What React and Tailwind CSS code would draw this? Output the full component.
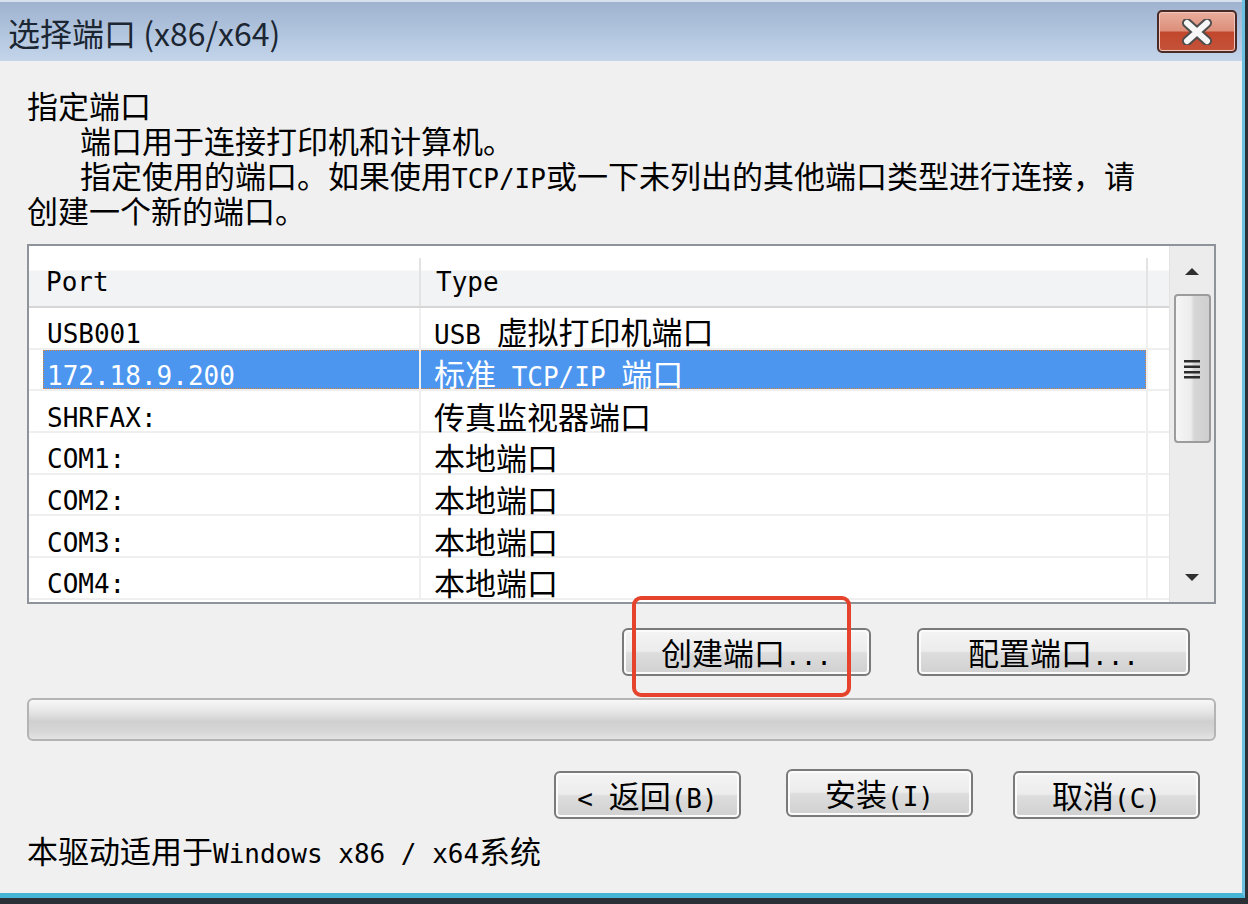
import React from 'react';

// Half-width latin text, the way SimSun draws it next to CJK glyphs
const M = ({ children, className = '' }) => (
    <span className={`font-['DejaVu_Sans_Mono',monospace] text-[26px] leading-none ${className}`}>{children}</span>
);

const ports = [
    { port: 'USB001', type: <><M>USB </M>虚拟打印机端口</> },
    { port: '172.18.9.200', type: <>标准<M> TCP/IP </M>端口</>, selected: true },
    { port: 'SHRFAX:', type: <>传真监视器端口</> },
    { port: 'COM1:', type: <>本地端口</> },
    { port: 'COM2:', type: <>本地端口</> },
    { port: 'COM3:', type: <>本地端口</> },
    { port: 'COM4:', type: <>本地端口</> },
];

const btnClass =
    "flex items-center justify-center h-[48px] rounded-[6px] border-2 border-[#7a7a7a] bg-[linear-gradient(to_bottom,#f4f4f4_0%,#ececec_48%,#dddddd_52%,#d0d0d0_100%)] shadow-[inset_0_0_0_2px_#fbfbfb] text-black leading-none";

const Button = ({ className = '', children }) => (
    <div className={`${btnClass} ${className}`}>
        <span className="leading-none">{children}</span>
    </div>
);

const Row = ({ port, type, selected }) => {
    const sel = selected ? 'bg-[#4d96ef] text-white border-dotted border-[#d8823c]' : 'border-transparent';
    return (
        <div className="flex h-[41.7px] border-b-2 border-[#efefef]">
            <div className="w-[392px] h-full pl-[14px] border-r-2 border-[#efefef]">
                <div className={`h-full flex items-center pl-[3px] pt-[13px] border-l border-t border-b ${sel}`}>
                    <M>{port}</M>
                </div>
            </div>
            <div className="w-[727px] h-full border-r-2 border-[#efefef]">
                <div className={`h-full flex items-center pl-[13px] pt-[8px] border-r border-t border-b ${sel}`}>
                    <span className="leading-none">{type}</span>
                </div>
            </div>
            <div className="flex-1" />
        </div>
    );
};

const Scrollbar = () => (
    <div className="w-[45px] h-full flex flex-col items-center bg-[#ececec] border-l border-[#e2e2e2]">
        <div className="h-[48px] w-full flex items-center justify-center pt-[2px]">
            <svg width="16" height="9" viewBox="0 0 16 9">
                <path d="M1 8 L8 1 L15 8 Z" fill="#303030" />
            </svg>
        </div>
        <div className="w-[37px] h-[149px] rounded-[4px] border-2 border-[#9c9c9c] bg-[linear-gradient(to_right,#f6f6f6_0%,#ececec_45%,#d6d6d6_55%,#cfcfcf_100%)] flex items-center justify-center">
            <svg width="18" height="20" viewBox="0 0 18 20">
                <rect x="1" y="1" width="16" height="2.5" fill="#2c2c2c" />
                <rect x="1" y="6.5" width="16" height="2.5" fill="#2c2c2c" />
                <rect x="1" y="12" width="16" height="2.5" fill="#2c2c2c" />
                <rect x="1" y="17" width="16" height="2.5" fill="#2c2c2c" />
            </svg>
        </div>
        <div className="flex-1" />
        <div className="h-[48px] w-full flex items-center justify-center pb-[2px]">
            <svg width="16" height="9" viewBox="0 0 16 9">
                <path d="M1 1 L15 1 L8 8 Z" fill="#303030" />
            </svg>
        </div>
    </div>
);

const App = () => {
    return (
        <div className="relative w-[1248px] h-[904px] bg-[#2b3036] overflow-hidden font-['Noto_Sans_CJK_SC',sans-serif] text-[31px] text-black">
            <div className="flex flex-col w-[1245px] h-[898px] bg-[#f0f0f0] border-r-[3px] border-b-[5px] border-r-[#6cc0e2] border-b-[#45b4d6]">
                {/* title bar */}
                <div className="h-[61px] shrink-0 flex items-center justify-between pl-[8px] pr-[5px] bg-[linear-gradient(to_bottom,#9fb3cf_0%,#b0c4de_50%,#c4d5ea_100%)] border-t-2 border-[#d7e1ee]">
                    <div className="text-[32px] leading-none text-[#1c2633]">选择端口 (x86/x64)</div>
                    <div className="w-[80px] h-[43px] rounded-[5px] border-2 border-[#4a2a26] bg-[linear-gradient(to_bottom,#e9ad9c_0%,#dc8f7b_48%,#c2472c_52%,#c4533a_100%)] shadow-[inset_0_0_0_1px_#f3c7bb] flex items-center justify-center">
                        <svg width="34" height="26" viewBox="0 0 34 26">
                            <path d="M7 4 L27 22 M27 4 L7 22" stroke="#4d4d4d" strokeWidth="10" strokeLinecap="round" />
                            <path d="M7 4 L27 22 M27 4 L7 22" stroke="#f7f7f7" strokeWidth="6" strokeLinecap="round" />
                        </svg>
                    </div>
                </div>

                {/* body */}
                <div className="flex-1 flex flex-col pl-[27px] pt-[25.5px]">
                    <div className="leading-[35px]">
                        <div className="h-[35px]">指定端口</div>
                        <div className="h-[35px] pl-[53px]">端口用于连接打印机和计算机。</div>
                        <div className="h-[35px] pl-[53px] whitespace-nowrap">指定使用的端口。如果使用<M>TCP/IP</M>或一下未列出的其他端口类型进行连接，请</div>
                        <div className="h-[35px]">创建一个新的端口。</div>
                    </div>

                    {/* port list */}
                    <div className="mt-[17.5px] w-[1189px] h-[360px] flex border-2 border-[#8f949a] bg-white">
                        <div className="flex-1 flex flex-col">
                            <div className="h-[62px] flex border-b-2 border-[#d6d6d6] bg-[linear-gradient(to_bottom,#ffffff_0%,#ffffff_40%,#f2f3f5_42%,#f2f3f5_100%)] pt-[12px]">
                                <div className="w-[392px] flex items-center pl-[17px] border-r-2 border-[#e3e3e3]">
                                    <M>Port</M>
                                </div>
                                <div className="w-[727px] flex items-center pl-[15px] border-r-2 border-[#e3e3e3]">
                                    <M>Type</M>
                                </div>
                                <div className="flex-1" />
                            </div>
                            {ports.map(p => (
                                <Row key={p.port} {...p} />
                            ))}
                        </div>
                        <Scrollbar />
                    </div>

                    {/* port buttons */}
                    <div className="mt-[24px] w-[1189px] flex justify-end gap-[46px] pr-[26px]">
                        <Button className="w-[249px]">创建端口<M>...</M></Button>
                        <Button className="w-[273px]">配置端口<M>...</M></Button>
                    </div>

                    {/* progress */}
                    <div className="mt-[22px] w-[1189px] h-[43px] rounded-[6px] border-2 border-[#b4b4b4] bg-[linear-gradient(to_bottom,#f7f7f7_0%,#e6e6e6_30%,#d0d0d0_55%,#d6d6d6_80%,#e4e4e4_100%)]" />

                    {/* wizard buttons */}
                    <div className="mt-[28px] h-[50px] w-[1189px] flex items-end pr-[16px] justify-end">
                        <Button className="w-[187px]"><M>&lt; </M>返回<M>(B)</M></Button>
                        <Button className="w-[187px] ml-[45px] self-start">安装<M>(I)</M></Button>
                        <Button className="w-[187px] ml-[40px]">取消<M>(C)</M></Button>
                    </div>

                    <div className="mt-[13px] h-[35px] leading-[35px] whitespace-nowrap">
                        本驱动适用于<M>Windows x86 / x64</M>系统
                    </div>
                </div>
            </div>

            {/* red annotation box */}
            <div className="absolute left-[632px] top-[596px] w-[219px] h-[101px] rounded-[9px] border-[4px] border-[#e5432c]" />
        </div>
    );
};

export default App;
